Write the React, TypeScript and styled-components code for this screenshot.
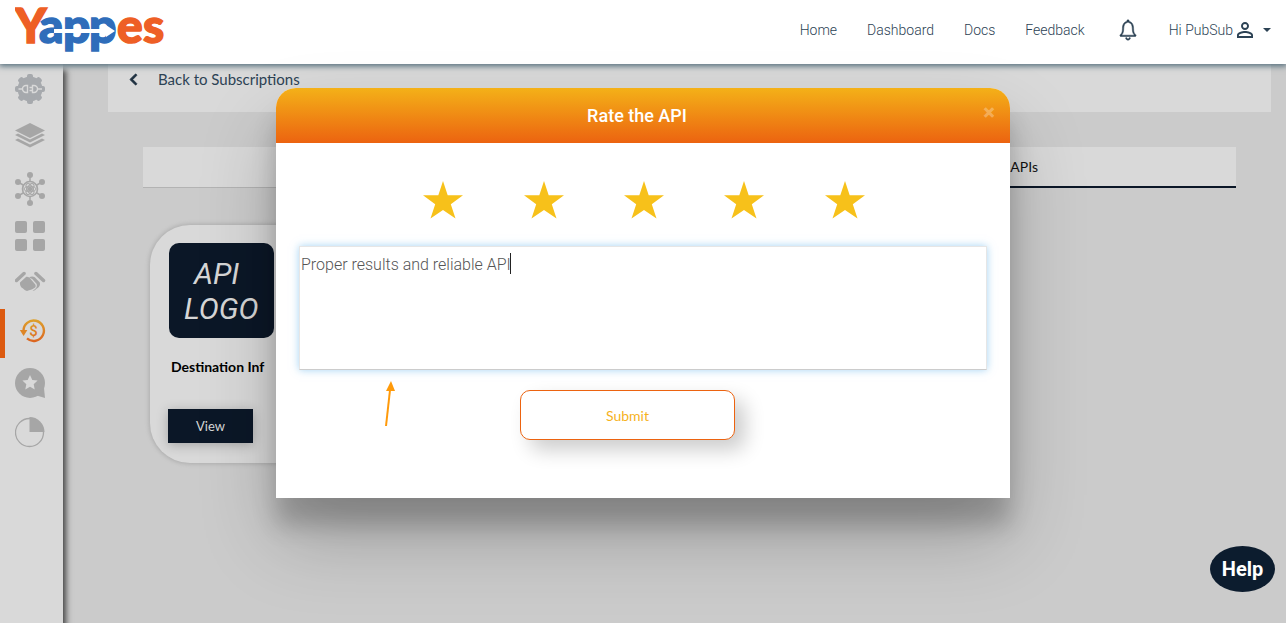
import React from "react";
import styled, { createGlobalStyle } from "styled-components";
import { FaChevronLeft } from "react-icons/fa";
import { MdPersonOutline } from "react-icons/md";
import { IoIosNotificationsOutline } from "react-icons/io";

const navy = "#0b1727";
const ink = "#2c4254";
const panel = "#d9d9d9";
const grey = "#a6a6a6";

const GlobalStyle = createGlobalStyle`
  * { box-sizing: border-box; }
  body { margin: 0; background: #cbcbcb; font-family: Roboto, "Liberation Sans", sans-serif; font-size: 14px; }
  button { font: inherit; border: 0; padding: 0; background: none; cursor: pointer; }
  a { color: inherit; text-decoration: none; }
`;

const Page = styled.div`
  display: flex;
  flex-direction: column;
  min-height: 100vh;
  position: relative;
`;

const Header = styled.header`
  display: flex;
  align-items: center;
  justify-content: space-between;
  height: 64px;
  padding: 0 15px;
  background: #fff;
  box-shadow: 0 1px 6px 1px #4f6a78;
  position: relative;
  z-index: 2;
`;

const Nav = styled.nav`
  display: flex;
  align-items: center;
  height: 60px;
  gap: 30px;
  align-self: flex-start;
  color: ${ink};
  font-weight: 300;
`;

const IconButton = styled.button`
  display: flex;
  color: ${ink};
  svg { stroke: ${ink}; stroke-width: 10px; }
`;

const UserMenu = styled.button`
  display: flex;
  align-items: center;
  height: 62px;
  margin-left: -2px;
  color: ${ink};
  font-weight: 300;
`;

const Caret = styled.span`
  margin-left: 6px;
  border: 4px solid transparent;
  border-top-color: ${ink};
  border-bottom: 0;
`;

const Body = styled.div`
  display: flex;
  flex: 1;
`;

const Sidebar = styled.nav`
  display: flex;
  flex-direction: column;
  width: 63px;
  background: ${panel};
  box-shadow: 3px 6px 6px 0 #444;
`;

const SideItem = styled.a<{ $active?: boolean }>`
  display: flex;
  height: 49px;
  padding-left: ${(p) => (p.$active ? 10 : 15)}px;
  border-left: ${(p) => (p.$active ? "5px solid #dc5a10" : "0")};
`;

const Main = styled.main`
  flex: 1;
  padding: 0 15px 0 45px;
`;

const BackBar = styled.div`
  height: 48px;
  padding: 6px 19px;
  background: ${panel};
`;

const BackLink = styled.a`
  display: inline-flex;
  align-items: center;
  gap: 18px;
  font-family: Lato, sans-serif;
  font-size: 15px;
  line-height: 18px;
  color: ${ink};
  svg { color: #1e3040; stroke: #1e3040; stroke-width: 30px; }
`;

const Tabs = styled.div`
  display: flex;
  margin: 35px 35px 0;
`;

const Tab = styled.button<{ $active?: boolean }>`
  flex: 1;
  height: 41px;
  padding-right: 198px;
  text-align: right;
  font-family: Lato, sans-serif;
  font-size: 14px;
  color: #111;
  background: ${panel};
  border-bottom: ${(p) => (p.$active ? `2px solid ${navy}` : "1px solid #b3b3b3")};
`;

const Card = styled.article`
  display: flex;
  flex-direction: column;
  align-items: flex-start;
  width: 240px;
  height: 238px;
  margin: 37px 42px 0;
  padding: 18px;
  border-radius: 40px;
  background: ${panel};
  box-shadow: 0 0 4px 1px #acacac;
`;

const ApiLogo = styled.div`
  width: 105px;
  height: 95px;
  margin-left: 1px;
  padding: 13px 0 0 15px;
  border-radius: 10px;
  background: ${navy};
  color: #d6d6d6;
  font-size: 30px;
  font-style: italic;
  line-height: 35px;
  span { display: block; }
  span:first-child { padding-left: 10px; }
`;

const CardTitle = styled.h2`
  margin: 20px 3px 33px;
  font-family: Lato, sans-serif;
  font-size: 14px;
  line-height: 18px;
  color: #000;
`;

const ViewButton = styled.button`
  width: 85px;
  height: 34px;
  background: ${navy};
  color: #d6d6d6;
  font-family: Lato, sans-serif;
  font-size: 13px;
  box-shadow: 0 2px 12px rgba(0, 0, 0, 0.25);
`;

const Overlay = styled.div`
  position: absolute;
  inset: 88px 0 auto;
  z-index: 3;
  display: flex;
  justify-content: center;
`;

const Dialog = styled.section`
  position: relative;
  width: 734px;
  max-width: 100%;
  border-radius: 20px 20px 0 0;
  background: #fff;
  box-shadow: 0 27px 24px rgba(0, 0, 0, 0.2), 0 40px 77px rgba(0, 0, 0, 0.22);
`;

const DialogHeader = styled.header`
  display: flex;
  height: 55px;
  padding: 0 15px;
  border-radius: 20px 20px 0 0;
  background: linear-gradient(#f4b118, #ec6310);
`;

const DialogTitle = styled.h1`
  flex: 1;
  margin: 0;
  text-align: center;
  color: #fff;
  font-size: 18px;
  font-weight: 500;
  line-height: 56px;
`;

const CloseButton = styled.button`
  width: 12px;
  height: 48px;
  color: rgba(255, 255, 255, 0.3);
  font-size: 22px;
  font-weight: 900;
`;

const ReviewForm = styled.form`
  padding: 38px 23px 58px;
`;

const Stars = styled.div`
  display: grid;
  grid-template-columns: repeat(5, 1fr);
  justify-items: center;
  max-width: 502px;
  margin: 0 auto 26px;
  svg { display: block; }
`;

const Field = styled.div`
  position: relative;
`;

const Review = styled.textarea`
  display: block;
  width: 100%;
  height: 124px;
  padding: 6px 1px;
  border: 1px solid #e6e6e6;
  border-bottom-color: #ccc;
  outline: 0;
  resize: none;
  color: #555;
  font: 300 16px/24px Roboto, sans-serif;
  caret-color: transparent;
  box-shadow: 0 0 8px rgba(90, 175, 235, 0.55);
`;

const TextCursor = styled.span`
  position: absolute;
  top: 7px;
  left: 211px;
  width: 1px;
  height: 21px;
  background: #222;
`;

const Actions = styled.div`
  display: flex;
  justify-content: center;
  margin-top: 20px;
  padding-right: 31px;
`;

const SubmitButton = styled.button`
  width: 215px;
  height: 50px;
  border: 1px solid #ec6310;
  border-radius: 10px;
  background: #fff;
  color: #f6b21c;
  font-family: Lato, sans-serif;
  font-size: 14px;
  box-shadow: 10px 10px 20px rgba(0, 0, 0, 0.2);
`;

const Pointer = styled.svg`
  position: absolute;
  top: 293px;
  left: 108px;
`;

const HelpButton = styled.button`
  position: absolute;
  right: 11px;
  bottom: 31px;
  width: 65px;
  height: 46px;
  border-radius: 50%;
  background: #0c1c2e;
  color: #fff;
  font-size: 20px;
  font-weight: 700;
`;

const Logo = () => (
  <svg width="152" height="56" viewBox="0 0 152 56" role="img" aria-label="Yappes">
    <g fontFamily="Lato, sans-serif" fontWeight="900" fontSize="48" strokeWidth="1.500">
      <text x="0" y="39" fill="#ee5f25" stroke="#ee5f25">Y</text>
      <g fill="#2f6dba" stroke="#2f6dba">
        <text x="24" y="39">a</text>
        <text x="48" y="39">p</text>
        <text x="74" y="39">p</text>
      </g>
      <g fill="#ee5f25" stroke="#ee5f25">
        <text x="102" y="39">e</text>
        <text x="128" y="39">s</text>
      </g>
    </g>
    <path d="M39 25h52v-4l9 6-9 6v-4H39z" fill="#fff" />
  </svg>
);

const gearTeeth = [0, 45, 90, 135, 180, 225, 270, 315];
const star = "0,-10 2.9,-3.600 9.500,-3.100 4.600,1.500 5.900,8.100 0,4.800 -5.900,8.100 -4.600,1.500 -9.500,-3.100 -2.900,-3.600";
const hubNodes = [[15, 13], [15, 41], [3, 20], [27, 20], [3, 34], [27, 34]];

const icons: { label: string; active?: boolean; art: React.ReactNode }[] = [
  {
    label: "Integrations",
    art: (
      <g fill="#a6a9ad">
        <circle cx="15" cy="25" r="12.500" />
        {gearTeeth.map((a) => (
          <rect key={a} x="12" y="10" width="6" height="8" rx="2" transform={`rotate(${a} 15 25)`} />
        ))}
        <g fill="none" stroke={panel} strokeWidth="1.400">
          <path d="M3.500 25H8M12.500 21.500h-1.500a3.500 3.500 0 0 0 0 7h1.500zM17.500 21.500H19a3.500 3.500 0 0 1 0 7h-1.500zM14.500 23.500h3M14.500 26.500h3M22.500 25H27" />
        </g>
      </g>
    ),
  },
  {
    label: "Layers",
    art: (
      <g fill={grey}>
        <path d="M15 10l15 7.500-15 7.500L0 17.500z" />
        <path d="M0 22L3 20.500l12 6 12-6 3 1.500-15 7.500z" />
        <path d="M0 27L3 25.500l12 6 12-6 3 1.500-15 7.500z" />
      </g>
    ),
  },
  {
    label: "Hub",
    art: (
      <g fill="none" stroke={grey}>
        {hubNodes.map(([x, y]) => (
          <g key={`${x}-${y}`}>
            <path d={`M15 27L${x} ${y}`} strokeWidth="1.500" />
            <circle cx={x} cy={y} r="3" fill={grey} stroke="none" />
          </g>
        ))}
        <circle cx="15" cy="27" r="7.500" fill={panel} strokeWidth="1.600" />
        <ellipse cx="15" cy="27" rx="6" ry="2.800" />
        <ellipse cx="15" cy="27" rx="6" ry="2.800" transform="rotate(60 15 27)" />
        <ellipse cx="15" cy="27" rx="6" ry="2.800" transform="rotate(120 15 27)" />
        <circle cx="15" cy="27" r="2.300" fill={grey} stroke="none" />
      </g>
    ),
  },
  {
    label: "Apps",
    art: (
      <g fill={grey}>
        <rect x="0" y="10" width="12" height="12" rx="2" />
        <rect x="18" y="10" width="12" height="12" rx="2" />
        <rect x="0" y="28" width="12" height="12" rx="2" />
        <rect x="18" y="28" width="12" height="12" rx="2" />
      </g>
    ),
  },
  {
    label: "Partners",
    art: (
      <g fill={grey}>
        <path d="M1.500 20.500l7.500-7M28.500 20.500l-7.500-7" stroke={grey} strokeWidth="3.500" strokeLinecap="round" />
        <path d="M5 22.500l6-5.500c2-.6 3.500.8 5.500 3l3.800 4.500c.8 1.600.4 3-1 3.600-2 1.600-4.500 1.800-7.300 2.900-2-.4-3.200-2-5.500-3.500-1.300-1.500-1.800-3.200-1.500-5z" />
        <path d="M14 17.500c2-1.600 4.300-1.300 5.800-.2l5 5.200c.8 3.200-.9 5-3.300 6.300-1.200 1.600-2.500 2.200-4 1.900 3.700-1.700 5-4 4.200-6.700l-4.500-5z" />
      </g>
    ),
  },
  {
    label: "Subscriptions",
    active: true,
    art: (
      <g>
        <defs>
          <linearGradient id="amber" x1="0" y1="10" x2="0" y2="33" gradientUnits="userSpaceOnUse">
            <stop offset="0" stopColor="#dda22c" />
            <stop offset="1" stopColor="#dc6420" />
          </linearGradient>
        </defs>
        <path d="M8.500 22a10.200 10.200 0 1 1 3.500 7.400" fill="none" stroke="url(#amber)" strokeWidth="2.400" />
        <path d="M4.800 21h7.600l-3.800 6z" fill="#dd8525" />
        <text x="18.500" y="27" textAnchor="middle" fontSize="15" fontWeight="500" fill="url(#amber)">$</text>
      </g>
    ),
  },
  {
    label: "Reviews",
    art: (
      <g>
        <circle cx="15" cy="25" r="15" fill={grey} />
        <path d="M20 37l10 3-1-10z" fill={grey} />
        <polygon points={star} transform="translate(15 25) scale(.8)" fill={panel} />
      </g>
    ),
  },
  {
    label: "Reports",
    art: (
      <g>
        <circle cx="14.500" cy="25.500" r="14" fill="none" stroke={grey} strokeWidth="1.300" />
        <path d="M14.500 25V10A15 15 0 0 1 29.500 25z" fill={grey} />
      </g>
    ),
  },
];

export default function App() {
  return (
    <Page>
      <GlobalStyle />
      <Header>
        <Logo />
        <Nav>
          <a href="#home">Home</a>
          <a href="#dashboard">Dashboard</a>
          <a href="#docs">Docs</a>
          <a href="#feedback">Feedback</a>
          <IconButton aria-label="Notifications">
            <IoIosNotificationsOutline size={26} />
          </IconButton>
          <UserMenu>
            Hi PubSub
            <MdPersonOutline size={24} />
            <Caret />
          </UserMenu>
        </Nav>
      </Header>
      <Body>
        <Sidebar>
          {icons.map((i) => (
            <SideItem key={i.label} href="#" aria-label={i.label} $active={i.active}>
              <svg width="31" height="49" viewBox="0 0 31 49">{i.art}</svg>
            </SideItem>
          ))}
        </Sidebar>
        <Main>
          <BackBar>
            <BackLink href="#subscriptions">
              <FaChevronLeft size={13} />
              Back to Subscriptions
            </BackLink>
          </BackBar>
          <Tabs>
            <Tab />
            <Tab $active>APIs</Tab>
          </Tabs>
          <Card>
            <ApiLogo>
              <span>API</span>
              <span>LOGO</span>
            </ApiLogo>
            <CardTitle>Destination Inf</CardTitle>
            <ViewButton>View</ViewButton>
          </Card>
        </Main>
      </Body>
      <HelpButton>Help</HelpButton>
      <Overlay>
        <Dialog role="dialog" aria-labelledby="rate-title">
          <DialogHeader>
            <DialogTitle id="rate-title">Rate the API</DialogTitle>
            <CloseButton aria-label="Close">×</CloseButton>
          </DialogHeader>
          <ReviewForm onSubmit={(e) => e.preventDefault()}>
            <Stars>
              {[1, 2, 3, 4, 5].map((n) => (
                <button key={n} type="button" aria-label={`${n} stars`}>
                  <svg width="40" height="39" viewBox="-21 -20 40 39" overflow="visible">
                    <polygon
                      points="0,-20 4.700,-5.800 20,-5.800 7.800,3.200 12.500,17.500 0,9 -12.500,17.500 -7.800,3.200 -20,-5.800 -4.700,-5.800"
                      fill="#f7c11a"
                    />
                  </svg>
                </button>
              ))}
            </Stars>
            <Field>
              <Review aria-label="Review" defaultValue="Proper results and reliable API" />
              <TextCursor />
            </Field>
            <Actions>
              <SubmitButton type="submit">Submit</SubmitButton>
            </Actions>
          </ReviewForm>
          <Pointer width="12" height="46" viewBox="0 0 12 46">
            <path d="M2 45L6 9" stroke="#ff9a0a" strokeWidth="2" />
            <path d="M7 0l4 10H2z" fill="#ff9a0a" />
          </Pointer>
        </Dialog>
      </Overlay>
    </Page>
  );
}
